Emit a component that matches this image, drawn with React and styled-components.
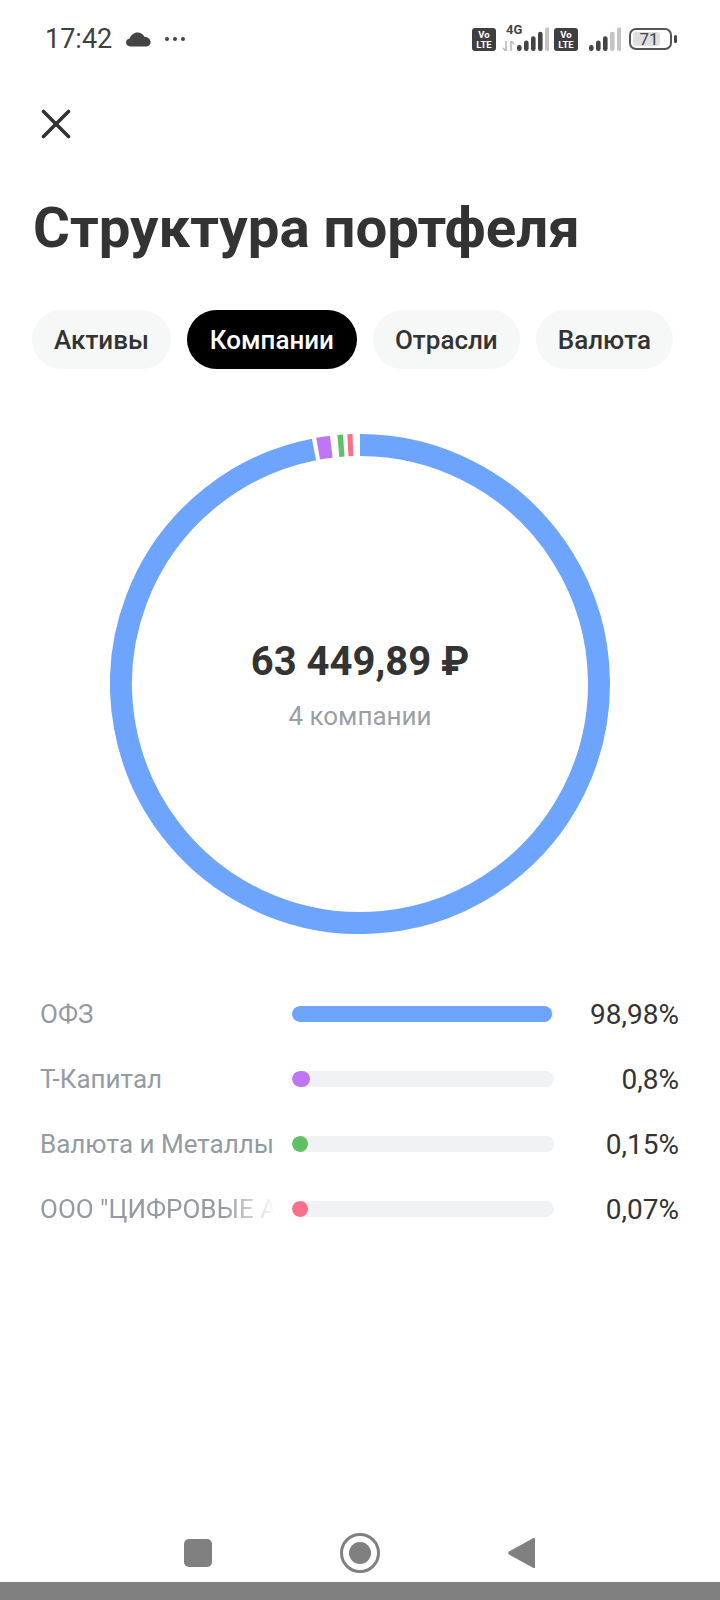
import React from 'react'
import styled, { createGlobalStyle } from 'styled-components'

const GlobalStyle = createGlobalStyle`
  html, body { margin: 0; padding: 0; background: #fff; }
  * { box-sizing: border-box; }
`

const tabs = [
  { name: 'Активы' },
  { name: 'Компании', active: true },
  { name: 'Отрасли' },
  { name: 'Валюта' },
]

const rows = [
  { name: 'ОФЗ', value: '98,98%', color: '#6ca4fe', width: 260 },
  { name: 'Т-Капитал', value: '0,8%', color: '#c076f4', width: 18 },
  { name: 'Валюта и Металлы', value: '0,15%', color: '#5fc166', width: 16 },
  { name: 'ООО "ЦИФРОВЫЕ АКТИВЫ"', value: '0,07%', color: '#fb6f8a', width: 16, fade: true },
]

const R = 239
const point = (deg) => {
  const a = ((deg - 90) * Math.PI) / 180
  return `${(250 + R * Math.cos(a)).toFixed(2)} ${(250 + R * Math.sin(a)).toFixed(2)}`
}
const arc = (from, to) => `M ${point(from)} A ${R} ${R} 0 ${to - from > 180 ? 1 : 0} 1 ${point(to)}`

const segments = [
  { from: 0, to: 348.9, color: '#6ca4fe' },
  { from: 349.9, to: 353.1, color: '#c076f4' },
  { from: 354.8, to: 356.1, color: '#5fc166' },
  { from: 357.1, to: 358.3, color: '#fb6f8a' },
]

const Signal = ({ active }) => (
  <svg width="32" height="24" viewBox="0 0 32 24">
    {[0, 1, 2, 3, 4].map((i) => (
      <rect
        key={i}
        x={i * 7}
        y={18 - i * 4.4}
        width="4.6"
        height={6 + i * 4.4}
        rx="2.2"
        fill={i < active ? '#444' : '#c4c4c4'}
      />
    ))}
  </svg>
)

const App = () => {
  return (
    <Page>
      <GlobalStyle />
      <StatusBar>
        <StatusLeft>
          <Time>17:42</Time>
          <svg width="25" height="15" viewBox="0 0 25 15">
            <path d="M4.500 14.500C1.800 14.500 0 12.800 0 10.600c0-2.100 1.600-3.800 3.800-4C4.800 3 8 .6 11.600.6c3 0 5.600 1.600 6.800 4.200 3.600.2 6.200 2.600 6.200 5.400 0 2.500-2 4.300-4.700 4.300z" fill="#444" />
          </svg>
          <Dots>
            <i /><i /><i />
          </Dots>
        </StatusLeft>
        <StatusRight>
          <VoLte>Vo<br />LTE</VoLte>
          <NetBlock>
            <NetLabel>4G</NetLabel>
            <svg width="13" height="10" viewBox="0 0 13 10">
              <path d="M4 0v10M4 10L1 7M9 0v10M9 0l3 3" stroke="#bbb" strokeWidth="1.6" fill="none" />
            </svg>
            <Signal active={4} />
          </NetBlock>
          <VoLte>Vo<br />LTE</VoLte>
          <SecondSignal>
            <Signal active={3} />
          </SecondSignal>
          <Battery>
            <BatteryFill />
            <BatteryText>71</BatteryText>
          </Battery>
          <BatteryNub />
        </StatusRight>
      </StatusBar>

      <CloseButton>
        <svg width="30" height="30" viewBox="0 0 30 30">
          <path d="M2.500 2.500l25 25M27.500 2.500l-25 25" stroke="#333" strokeWidth="3.600" strokeLinecap="round" />
        </svg>
      </CloseButton>

      <Title>Структура портфеля</Title>

      <Tabs>
        {tabs.map((t) => (
          <Tab key={t.name} $active={t.active}>{t.name}</Tab>
        ))}
      </Tabs>

      <Chart>
        <svg width="500" height="500" viewBox="0 0 500 500">
          {segments.map((s) => (
            <path key={s.color} d={arc(s.from, s.to)} stroke={s.color} strokeWidth="22" fill="none" />
          ))}
        </svg>
        <ChartCenter>
          <Sum>63 449,89 ₽</Sum>
          <Caption>4 компании</Caption>
        </ChartCenter>
      </Chart>

      <Legend>
        {rows.map((r) => (
          <Row key={r.name}>
            <RowName $fade={r.fade}>{r.name}</RowName>
            <Track>
              <Fill $color={r.color} style={{ width: r.width }} />
            </Track>
            <RowValue>{r.value}</RowValue>
          </Row>
        ))}
      </Legend>

      <NavBar>
        <NavSquare />
        <NavCircle><i /></NavCircle>
        <svg width="27" height="32" viewBox="0 0 27 32">
          <path d="M25 1.200c1-.6 2-.1 2 1v27.600c0 1.100-1 1.600-2 1L1 17.500c-1-.6-1-2.400 0-3z" fill="#808080" />
        </svg>
      </NavBar>
      <NavStrip />
    </Page>
  )
}

const Page = styled.div`
  width: 720px;
  height: 1600px;
  display: flex;
  flex-direction: column;
  overflow: hidden;
  background: #fff;
  font-family: Roboto, "Liberation Sans", sans-serif;
  color: #333;
`

const StatusBar = styled.div`
  height: 48px;
  margin-top: 15px;
  padding: 0 45px;
  display: flex;
  align-items: center;
  justify-content: space-between;
`

const StatusLeft = styled.div`
  display: flex;
  align-items: center;
  gap: 14px;
`

const Time = styled.span`
  font-size: 27px;
  color: #404040;
`

const Dots = styled.div`
  display: flex;
  gap: 4px;
  i {
    width: 4px;
    height: 4px;
    border-radius: 50%;
    background: #444;
  }
`

const StatusRight = styled.div`
  display: flex;
  align-items: center;
  gap: 8px;
  margin-right: -2px;
`

const VoLte = styled.div`
  width: 24px;
  height: 23px;
  border-radius: 3px;
  background: #3f3f3f;
  color: #fff;
  font-size: 9.5px;
  font-weight: 700;
  line-height: 10px;
  text-align: center;
  padding-top: 2px;
`

const NetBlock = styled.div`
  position: relative;
  display: flex;
  align-items: flex-end;
  gap: 2px;
  height: 24px;
  margin: 0 -3px 0 -2px;
`

const NetLabel = styled.span`
  position: absolute;
  left: 4px;
  top: -5px;
  font-size: 13px;
  font-weight: 700;
  color: #444;
`

const SecondSignal = styled.div`
  display: flex;
  margin-left: 3px;
`

const Battery = styled.div`
  position: relative;
  width: 43px;
  height: 22px;
  border: 2px solid #555;
  border-radius: 7px;
  padding: 2px;
  display: flex;
  align-items: center;
  justify-content: center;
`

const BatteryFill = styled.div`
  position: absolute;
  left: 2px;
  top: 2px;
  bottom: 2px;
  width: 27px;
  border-radius: 3px;
  background: #dedede;
`

const BatteryText = styled.span`
  position: relative;
  font-size: 17px;
  color: #444;
  line-height: 1;
  margin-left: -3px;
`

const BatteryNub = styled.div`
  width: 3px;
  height: 8px;
  margin-left: -6px;
  border-radius: 2px;
  background: #444;
`

const CloseButton = styled.div`
  margin: 46px 0 0 41px;
  width: 30px;
  height: 30px;
  display: flex;
`

const Title = styled.h1`
  margin: 57px 0 0 33px;
  font-size: 56.4px;
  line-height: 64px;
  font-weight: 700;
  color: #333;
  white-space: nowrap;
`

const Tabs = styled.div`
  display: flex;
  gap: 16px;
  margin: 50px 0 0 32px;
`

const Tab = styled.div`
  height: 59px;
  padding: 0 ${({ $active }) => ($active ? '23px' : '22px')};
  display: flex;
  align-items: center;
  border-radius: 30px;
  font-size: 26px;
  font-weight: 500;
  background: ${({ $active }) => ($active ? '#000' : '#f6f7f7')};
  color: ${({ $active }) => ($active ? '#fff' : '#333')};
`

const Chart = styled.div`
  position: relative;
  width: 500px;
  height: 500px;
  margin: 65px 0 0 110px;
  svg {
    display: block;
  }
`

const ChartCenter = styled.div`
  position: absolute;
  inset: 0;
  display: flex;
  flex-direction: column;
  align-items: center;
  justify-content: center;
`

const Sum = styled.div`
  font-size: 40px;
  line-height: 46px;
  font-weight: 700;
  color: #333;
  margin-top: 1px;
`

const Caption = styled.div`
  margin-top: 16px;
  font-size: 26px;
  line-height: 30px;
  color: #9a9fa6;
`

const Legend = styled.div`
  margin: 60px 0 0 40px;
  display: flex;
  flex-direction: column;
  gap: 25px;
`

const Row = styled.div`
  height: 40px;
  display: flex;
  align-items: center;
  width: 639px;
`

const RowName = styled.div`
  width: 236px;
  margin-right: 16px;
  font-size: 26px;
  color: #949aa2;
  white-space: nowrap;
  overflow: hidden;
  ${({ $fade }) => $fade && `
    mask-image: linear-gradient(to right, #000 78%, transparent 100%);
  `}
`

const Track = styled.div`
  width: 262px;
  height: 16px;
  border-radius: 8px;
  background: #f0f2f3;
  overflow: hidden;
`

const Fill = styled.div`
  height: 100%;
  border-radius: 8px;
  background: ${({ $color }) => $color};
`

const RowValue = styled.div`
  flex: 1;
  text-align: right;
  font-size: 28px;
  color: #333;
`

const NavBar = styled.div`
  margin-top: auto;
  height: 44px;
  margin-bottom: 7px;
  padding-right: 1px;
  display: flex;
  align-items: center;
  justify-content: center;
  gap: 128px;
`

const NavSquare = styled.div`
  width: 28px;
  height: 28px;
  border-radius: 5px;
  background: #808080;
`

const NavCircle = styled.div`
  width: 40px;
  height: 40px;
  border-radius: 50%;
  border: 3px solid #808080;
  display: flex;
  align-items: center;
  justify-content: center;
  i {
    width: 22px;
    height: 22px;
    border-radius: 50%;
    background: #808080;
  }
`

const NavStrip = styled.div`
  height: 18px;
  background: #808080;
`

export default App
